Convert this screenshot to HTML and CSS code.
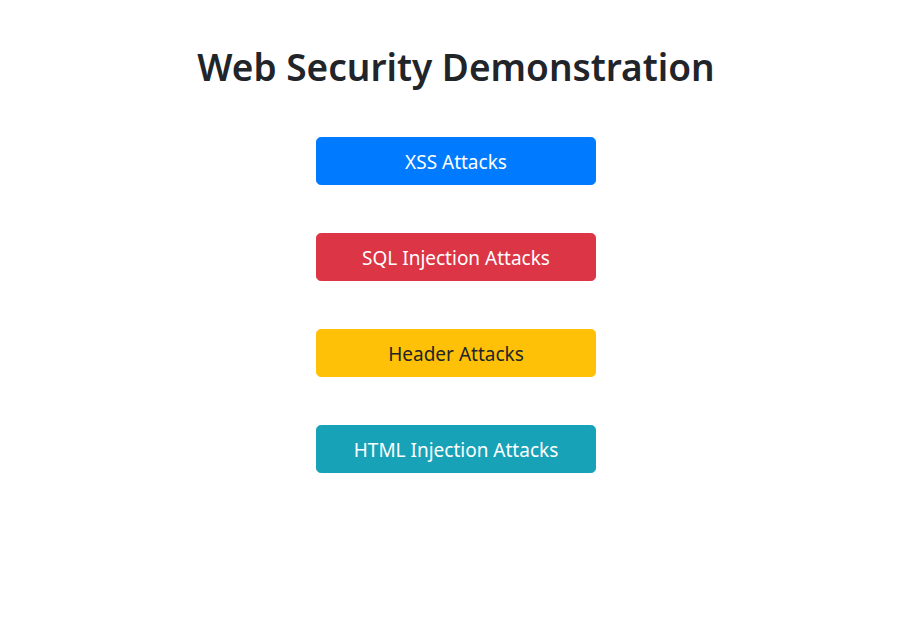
FILE: index.html
```html
<!DOCTYPE html>
<html lang="en">
<head>
<meta charset="utf-8">
<title>Web Security Demonstration</title>
<link rel="stylesheet" href="styles.css">
</head>
<body>
<main class="page">
  <h1 class="title">Web Security Demonstration</h1>
  <nav class="menu">
    <a class="btn btn-primary" href="#">XSS Attacks</a>
    <a class="btn btn-danger" href="#">SQL Injection Attacks</a>
    <a class="btn btn-warning" href="#">Header Attacks</a>
    <a class="btn btn-info" href="#">HTML Injection Attacks</a>
  </nav>
</main>
</body>
</html>
```
FILE: styles.css
```css
html, body {
  margin: 0;
  padding: 0;
  background: #fff;
}
body {
  font-family: "Noto Sans", "Open Sans", "Liberation Sans", sans-serif;
  color: #212529;
}
.page {
  display: flex;
  flex-direction: column;
  align-items: center;
  padding-top: 43px;
  padding-right: 1px;
}
.title {
  margin: 0;
  font-size: 37px;
  font-weight: 600;
  line-height: 48px;
  color: #212529;
}
.menu {
  display: flex;
  flex-direction: column;
  gap: 48px;
  margin-top: 46px;
}
.btn {
  display: block;
  box-sizing: border-box;
  width: 280px;
  height: 48px;
  padding: 9px 16px 7px;
  border: 1px solid transparent;
  border-radius: 4.8px;
  font-size: 19px;
  line-height: 30px;
  text-align: center;
  text-decoration: none;
  color: #fff;
}
.btn-primary { background: #007bff; border-color: #007bff; }
.btn-danger { background: #dc3545; border-color: #dc3545; }
.btn-warning { background: #ffc107; border-color: #ffc107; color: #212529; }
.btn-info { background: #17a2b8; border-color: #17a2b8; }
```
